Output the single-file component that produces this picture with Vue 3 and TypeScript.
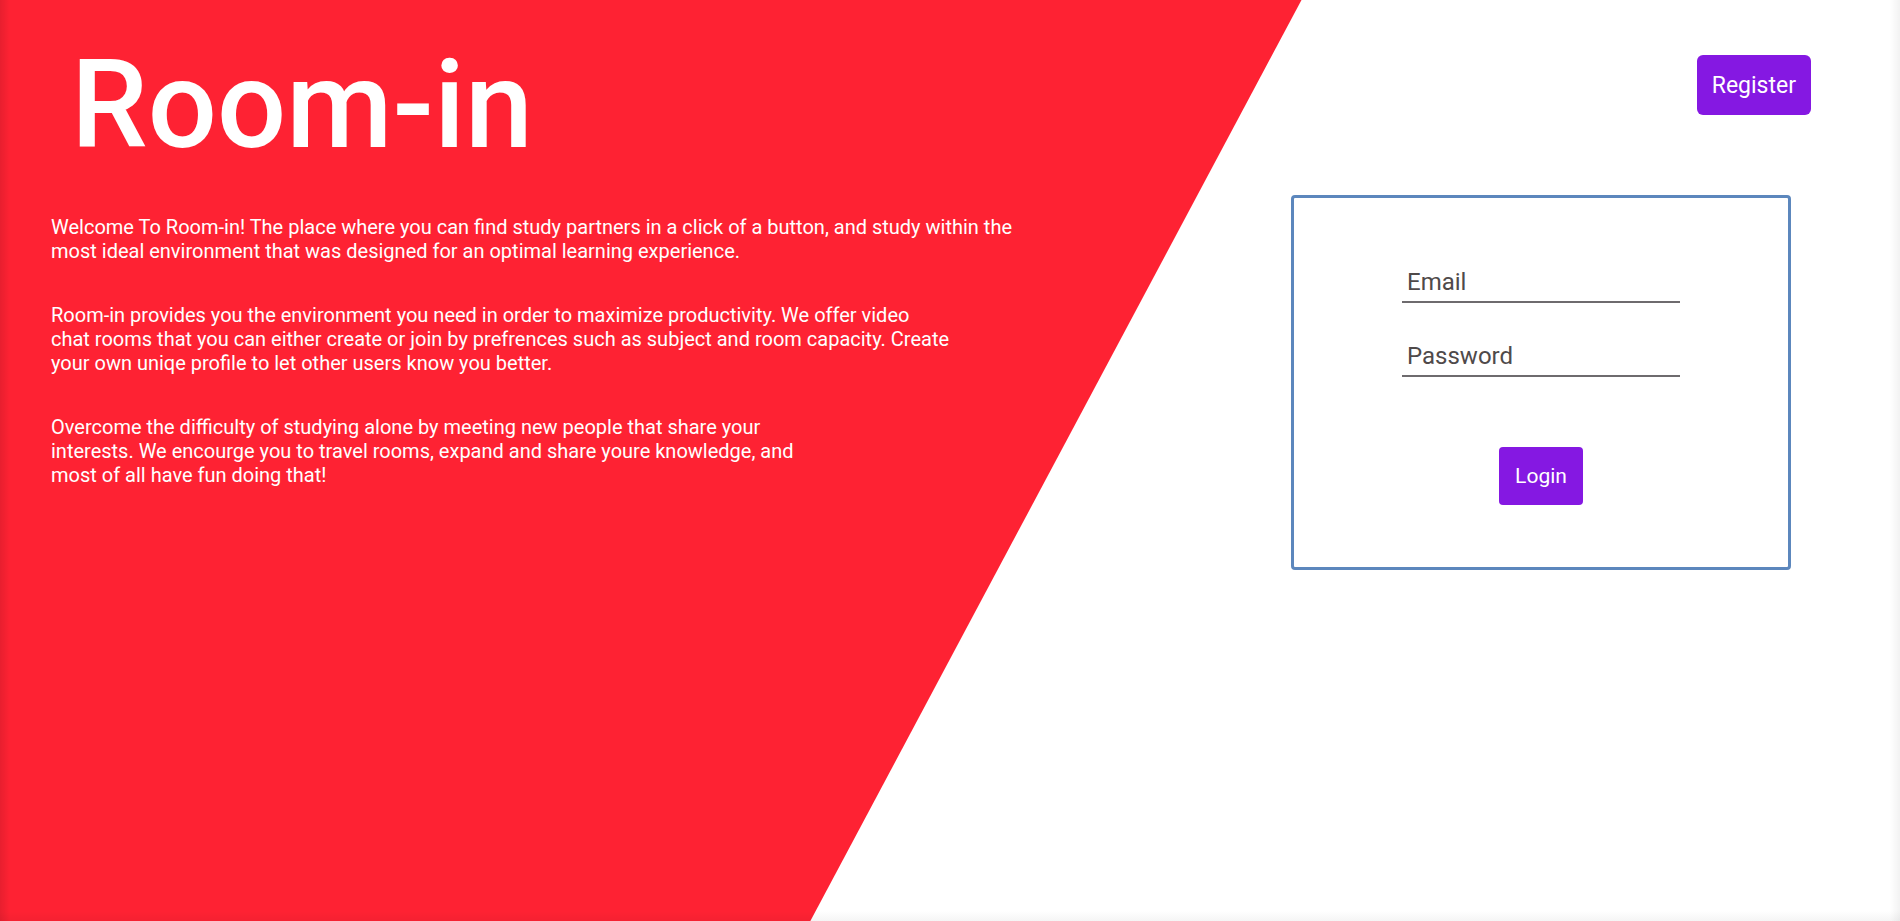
<script setup lang="ts">
import { ref } from 'vue'

const email = ref('')
const password = ref('')
const paragraphs: { size: string; text: string }[] = [
  { size: 'wide', text: 'Welcome To Room-in! The place where you can find study partners in a click of a button, and study within the most ideal environment that was designed for an optimal learning experience.' },
  { size: 'medium', text: 'Room-in provides you the environment you need in order to maximize productivity. We offer video chat rooms that you can either create or join by prefrences such as subject and room capacity. Create your own uniqe profile to let other users know you better.' },
  { size: 'narrow', text: 'Overcome the difficulty of studying alone by meeting new people that share your interests. We encourge you to travel rooms, expand and share youre knowledge, and most of all have fun doing that!' },
]
</script>

<template>
  <main class="page">
    <section class="intro">
      <h1 class="title">Room-in</h1>
      <p v-for="p in paragraphs" :key="p.size" class="copy" :class="p.size">{{ p.text }}</p>
    </section>
    <section class="account">
      <button type="button" class="button register">Register</button>
      <form class="card" @submit.prevent>
        <input v-model="email" class="field" type="email" placeholder="Email" aria-label="Email" />
        <input v-model="password" class="field" type="password" placeholder="Password" aria-label="Password" />
        <button type="submit" class="button login">Login</button>
      </form>
    </section>
  </main>
</template>

<style>
body {
  margin: 0;
}
</style>

<style scoped>
.page {
  position: relative;
  box-sizing: border-box;
  min-height: 100vh;
  display: flex;
  justify-content: space-between;
  font-family: Roboto, sans-serif;
  background: #fff;
  overflow: hidden;
}
.page::before {
  content: '';
  position: absolute;
  inset: 0;
  background: #fe2233;
  clip-path: polygon(0 0, 68.5% 0, 42.65% 100%, 0 100%);
}
.page::after {
  content: '';
  position: absolute;
  inset: 0;
  background:
    linear-gradient(to right, rgba(0, 0, 0, 0.09), transparent 10px),
    linear-gradient(to left, rgba(0, 0, 0, 0.05), transparent 10px),
    linear-gradient(to top, rgba(0, 0, 0, 0.04), transparent 10px);
  pointer-events: none;
}
.intro,
.account {
  position: relative;
}
.intro {
  flex: 1;
  padding: 34px 0 0 51px;
  color: #fff;
}
.title {
  margin: 0 0 37px 20px;
  font-size: 122px;
  line-height: 144px;
  font-weight: 500;
}
.copy {
  margin: 0 0 40px;
  font-size: 20px;
  line-height: 24px;
}
.wide {
  max-width: 970px;
}
.medium {
  max-width: 900px;
}
.narrow {
  max-width: 750px;
}
.account {
  display: flex;
  flex-direction: column;
  align-items: flex-end;
  padding: 55px 109px 0 0;
}
.button {
  border: 0;
  padding: 0 16px;
  color: #fff;
  background: #8518e2;
  font-family: inherit;
  cursor: pointer;
}
.register {
  height: 60px;
  margin-right: -20px;
  padding: 0 15px;
  border-radius: 6px;
  font-size: 23px;
}
.card {
  box-sizing: border-box;
  width: 500px;
  margin-top: 80px;
  padding: 62px 108px;
  display: flex;
  flex-direction: column;
  align-items: center;
  border: 3px solid #5c87bd;
  border-radius: 4px;
  background: #fff;
}
.field {
  box-sizing: border-box;
  width: 278px;
  height: 43px;
  margin-bottom: 31px;
  padding: 2px 5px 0;
  border: 0;
  border-bottom: 2px solid #6e6b6e;
  outline: 0;
  background: transparent;
  color: #4f4a4a;
  font-family: inherit;
  font-size: 24px;
}
.field::placeholder {
  color: #4f4a4a;
  opacity: 1;
}
.login {
  height: 58px;
  margin-top: 39px;
  border-radius: 4px;
  font-size: 21px;
}
</style>
